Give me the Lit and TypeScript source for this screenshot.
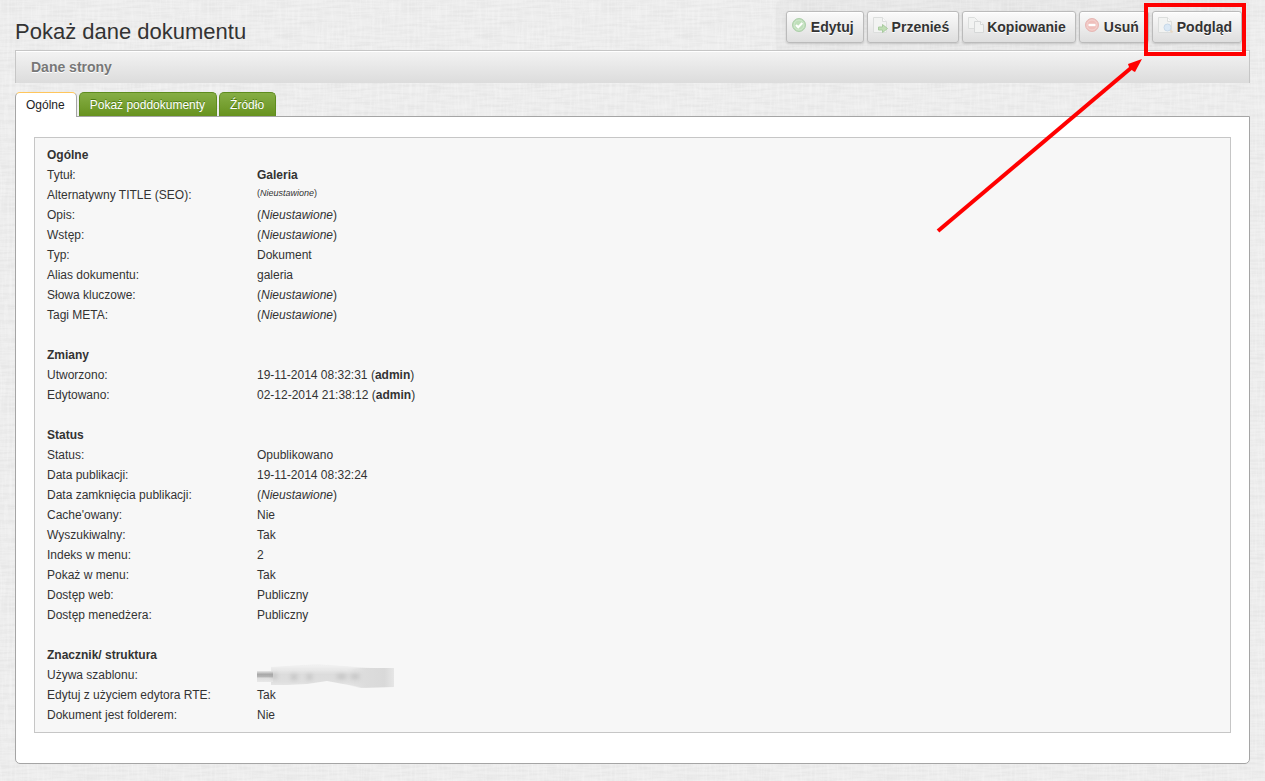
import { LitElement, html, svg, css, nothing } from "lit";
import { customElement, state } from "lit/decorators.js";

type Kind = "text" | "strong" | "unset" | "small-unset" | "stamp" | "hidden";
interface Row { label: string; value?: string; kind?: Kind; }
interface Section { title: string; rows: Row[]; }

const SECTIONS: Section[] = [
  {
    title: "Ogólne",
    rows: [
      { label: "Tytuł:", value: "Galeria", kind: "strong" },
      { label: "Alternatywny TITLE (SEO):", kind: "small-unset" },
      { label: "Opis:", kind: "unset" },
      { label: "Wstęp:", kind: "unset" },
      { label: "Typ:", value: "Dokument" },
      { label: "Alias dokumentu:", value: "galeria" },
      { label: "Słowa kluczowe:", kind: "unset" },
      { label: "Tagi META:", kind: "unset" },
    ],
  },
  {
    title: "Zmiany",
    rows: [
      { label: "Utworzono:", value: "19-11-2014 08:32:31", kind: "stamp" },
      { label: "Edytowano:", value: "02-12-2014 21:38:12", kind: "stamp" },
    ],
  },
  {
    title: "Status",
    rows: [
      { label: "Status:", value: "Opublikowano" },
      { label: "Data publikacji:", value: "19-11-2014 08:32:24" },
      { label: "Data zamknięcia publikacji:", kind: "unset" },
      { label: "Cache'owany:", value: "Nie" },
      { label: "Wyszukiwalny:", value: "Tak" },
      { label: "Indeks w menu:", value: "2" },
      { label: "Pokaż w menu:", value: "Tak" },
      { label: "Dostęp web:", value: "Publiczny" },
      { label: "Dostęp menedżera:", value: "Publiczny" },
    ],
  },
  {
    title: "Znacznik/ struktura",
    rows: [
      { label: "Używa szablonu:", kind: "hidden" },
      { label: "Edytuj z użyciem edytora RTE:", value: "Tak" },
      { label: "Dokument jest folderem:", value: "Nie" },
    ],
  },
];

const page = svg`<path d="M.5 .5h9l4 4v11h-13z" fill="#f2f3f2" stroke="#dcdedd"/><path d="M9.500 .5v4h4" fill="#f9f9f9" stroke="#dcdedd"/>`;

const ICONS: Record<string, unknown> = {
  edit: svg`<circle cx="7" cy="8" r="6.500" fill="#b9dab5" stroke="#aed0ab"/><circle cx="7" cy="8" r="5" fill="#bfdfba" stroke="#d3e9d0"/><path d="M4 8l2.200 2.300L10.300 6" fill="none" stroke="#fff" stroke-width="2"/>`,
  move: svg`${page}<path d="M5.500 10h4v-2.500l5 4-5 4v-2.500h-4z" fill="#c0deb4" stroke="#a9cba0"/>`,
  copy: svg`<path d="M.5 .5h6l3 3v8h-9z" fill="#f2f3f2" stroke="#dcdedd"/><path d="M6.500 4.500h6l3 3v8h-9z" fill="#f2f3f2" stroke="#d6d8d8"/><path d="M12.500 4.500v3h3" fill="#f9f9f9" stroke="#d6d8d8"/>`,
  remove: svg`<circle cx="7" cy="8" r="6.500" fill="#f0c2be" stroke="#e6b8b5"/><circle cx="7" cy="8" r="5" fill="#efbfbb" stroke="#f5d3d0"/><path d="M3.500 8h7" stroke="#fff" stroke-width="2.400"/>`,
  preview: svg`${page}<path d="M12 13l2.500 2.500" stroke="#e6d8c6" stroke-width="2"/><circle cx="9.500" cy="10.500" r="3.500" fill="#dae8f5" stroke="#c8d9e9"/>`,
};

const ACTIONS = [
  { icon: "edit", label: "Edytuj" },
  { icon: "move", label: "Przenieś" },
  { icon: "copy", label: "Kopiowanie" },
  { icon: "remove", label: "Usuń" },
  { icon: "preview", label: "Podgląd" },
];

const TABS = ["Ogólne", "Pokaż poddokumenty", "Źródło"];

@customElement("app-root")
export class AppRoot extends LitElement {
  @state() private active = 0;

  static styles = css`
    :host {
      display: block;
      box-sizing: border-box;
      min-height: 100vh;
      padding: 0 15px 17px;
      font: 12px/20px "Liberation Sans", Arial, sans-serif;
      color: #333;
      background-color: #eee;
      background-image: url("data:image/svg+xml,%3Csvg xmlns='http://www.w3.org/2000/svg' width='200' height='200'%3E%3Cfilter id='a' x='0' y='0' width='1' height='1'%3E%3CfeTurbulence type='fractalNoise' baseFrequency='.04 .4' numOctaves='2' stitchTiles='stitch'/%3E%3CfeColorMatrix values='0 0 0 0 0 0 0 0 0 0 0 0 0 0 0 .08 0 0 0 -.03'/%3E%3C/filter%3E%3Cfilter id='b' x='0' y='0' width='1' height='1'%3E%3CfeTurbulence type='fractalNoise' baseFrequency='.4 .04' numOctaves='2' seed='4' stitchTiles='stitch'/%3E%3CfeColorMatrix values='0 0 0 0 1 0 0 0 0 1 0 0 0 0 1 .6 0 0 0 -.25'/%3E%3C/filter%3E%3Crect width='200' height='200' filter='url(%23a)'/%3E%3Crect width='200' height='200' filter='url(%23b)'/%3E%3C/svg%3E");
    }
    *, *::before, *::after { box-sizing: border-box; }
    header { display: flex; justify-content: space-between; height: 50px; }
    h1 { margin: 0; padding-top: 18px; font-size: 22px; line-height: 28px; font-weight: 400; white-space: nowrap; }
    .toolbar {
      display: flex;
      gap: 3px;
      padding: 11px 8px 7px 10px;
      border-radius: 5px 5px 0 0;
      background: rgba(0, 0, 0, 0.02);
    }
    .slot { position: relative; display: flex; }
    .action {
      display: flex;
      align-items: center;
      gap: 3px;
      height: 32px;
      padding: 0 9px 0 5px;
      border: 1px solid #bbb;
      border-radius: 3px;
      background: linear-gradient(#fbfbfb, #dedede);
      box-shadow: 0 1px 2px rgba(0, 0, 0, 0.15), inset 0 1px 0 #fff;
      color: #333;
      font: bold 14px/20px "Liberation Sans", Arial, sans-serif;
      text-shadow: 0 1px 0 #fff;
      white-space: nowrap;
      cursor: pointer;
    }
    .icon { width: 16px; height: 16px; flex: none; display: block; margin-bottom: 4px; }
    .frame {
      position: absolute;
      top: -8px;
      left: -8px;
      right: -4px;
      bottom: -13px;
      border: 4px solid #f00;
      pointer-events: none;
      z-index: 3;
    }
    .arrow {
      position: absolute;
      right: 99px;
      top: 46px;
      width: 208px;
      height: 176px;
      pointer-events: none;
      z-index: 3;
    }
    h2 {
      margin: 0;
      height: 33px;
      padding: 0 15px;
      border: 1px solid #c6c6c6;
      border-bottom: 0;
      background: linear-gradient(#f3f3f3, #dcdcdc);
      box-shadow: inset 0 1px 0 #fff;
      color: #777;
      font-size: 14px;
      line-height: 32px;
      text-shadow: 0 1px 0 #fff;
    }
    .tabs { display: flex; gap: 2px; margin-top: 9px; }
    .tab {
      height: 24px;
      padding: 0 11px 0 10px;
      border: 1px solid #5e8c1e;
      border-bottom: 0;
      border-radius: 5px 5px 0 0;
      background: linear-gradient(#86ae45, #67921f);
      color: #fff;
      font: 12px/24px "Liberation Sans", Arial, sans-serif;
      text-shadow: 0 -1px 0 #4c7a12;
      white-space: nowrap;
      cursor: pointer;
    }
    .tab.on {
      position: relative;
      height: 25px;
      margin-bottom: -1px;
      border-color: #ffc65c #a5a5a5 #fff;
      background: #fff;
      color: #222;
      text-shadow: none;
    }
    .card {
      padding: 20px 18px 30px;
      border: 1px solid #a5a5a5;
      border-radius: 0 0 5px 5px;
      background: #fff;
    }
    .panel { padding: 7px 12px; border: 1px solid #c6c6c6; background: #f7f7f7; }
    section + section { margin-top: 20px; }
    h3 { margin: 0; font-size: 12px; line-height: 20px; }
    dl { display: grid; grid-template-columns: 210px 1fr; grid-auto-rows: 20px; margin: 0; }
    dd { margin: 0; }
    .small { display: block; font-size: 9px; line-height: 16px; }
    .smudge { display: block; width: 137px; height: 24px; overflow: visible; }
  `;

  private renderValue(row: Row) {
    switch (row.kind) {
      case "strong": return html`<b>${row.value}</b>`;
      case "unset": return html`(<i>Nieustawione</i>)`;
      case "small-unset": return html`<span class="small">(<i>Nieustawione</i>)</span>`;
      case "stamp": return html`${row.value} (<b>admin</b>)`;
      case "hidden": return html`<svg class="smudge" viewBox="0 0 137 24" aria-hidden="true">
        <defs>
          <linearGradient id="fade" x2="0" y2="1"><stop offset="0" stop-color="#e4e4e4" stop-opacity=".2"/><stop offset=".45" stop-color="#dcdcdc"/><stop offset=".75" stop-color="#dedede"/><stop offset="1" stop-color="#e8e8e8"/></linearGradient>
          <linearGradient id="tail"><stop offset="0" stop-color="#dcdcdc" stop-opacity="0"/><stop offset=".4" stop-color="#dcdcdc"/><stop offset=".8" stop-color="#d9d9d9"/><stop offset="1" stop-color="#e6e6e6"/></linearGradient>
          <linearGradient id="head" x2="0" y2="1"><stop offset="0" stop-color="#e8e8e8"/><stop offset=".3" stop-color="#a8a8a8"/><stop offset=".5" stop-color="#b4b4b4"/><stop offset=".65" stop-color="#dedede"/><stop offset="1" stop-color="#e8e8e8"/></linearGradient>
          <filter id="soft" x="-20%" y="-50%" width="140%" height="200%"><feGaussianBlur stdDeviation="2"/></filter>
          <filter id="edge"><feGaussianBlur stdDeviation=".6"/></filter>
        </defs>
        <path d="M14 2L60 -1L100 2L116 3V22H104L86 19L70 16L50 19L30 20H14z" fill="url(#fade)" filter="url(#edge)"/>
        <path d="M90 4L104 3H137V22L104 23L90 20z" fill="url(#tail)"/>
        <path d="M0 6H16V17H0z" fill="url(#head)"/>
        <path d="M15 8h5v6h-5zM34 9h6v6h-6zM50 9h5v6h-5zM80 9h9v5h-9zM94 9h8v5h-8z" fill="#999" opacity=".35" filter="url(#soft)"/>
      </svg>`;
      default: return row.value;
    }
  }

  render() {
    return html`
      <header>
        <h1>Pokaż dane dokumentu</h1>
        <div class="toolbar">
          ${ACTIONS.map((a) => html`<div class="slot">
            <button class="action" type="button">
              <svg class="icon" viewBox="0 0 16 16" aria-hidden="true">${ICONS[a.icon]}</svg>${a.label}
            </button>
            ${a.icon === "preview"
              ? html`<span class="frame"></span>
                <svg class="arrow" viewBox="0 0 208 176" aria-hidden="true">
                  <path d="M3 174L196 11" stroke="#f00" stroke-width="4"/>
                  <path d="M207 2L193 7L194 10L198 14L200 15z" fill="#f00"/>
                </svg>`
              : nothing}
          </div>`)}
        </div>
      </header>
      <h2>Dane strony</h2>
      <div class="tabs" role="tablist">
        ${TABS.map((t, i) => html`<button type="button" role="tab" aria-selected=${i === this.active}
          class="tab ${i === this.active ? "on" : ""}" @click=${() => (this.active = i)}>${t}</button>`)}
      </div>
      <main class="card">
        <div class="panel">
          ${SECTIONS.map((s) => html`<section>
            <h3>${s.title}</h3>
            <dl>${s.rows.map((r) => html`<dt>${r.label}</dt><dd>${this.renderValue(r)}</dd>`)}</dl>
          </section>`)}
        </div>
      </main>
    `;
  }
}
